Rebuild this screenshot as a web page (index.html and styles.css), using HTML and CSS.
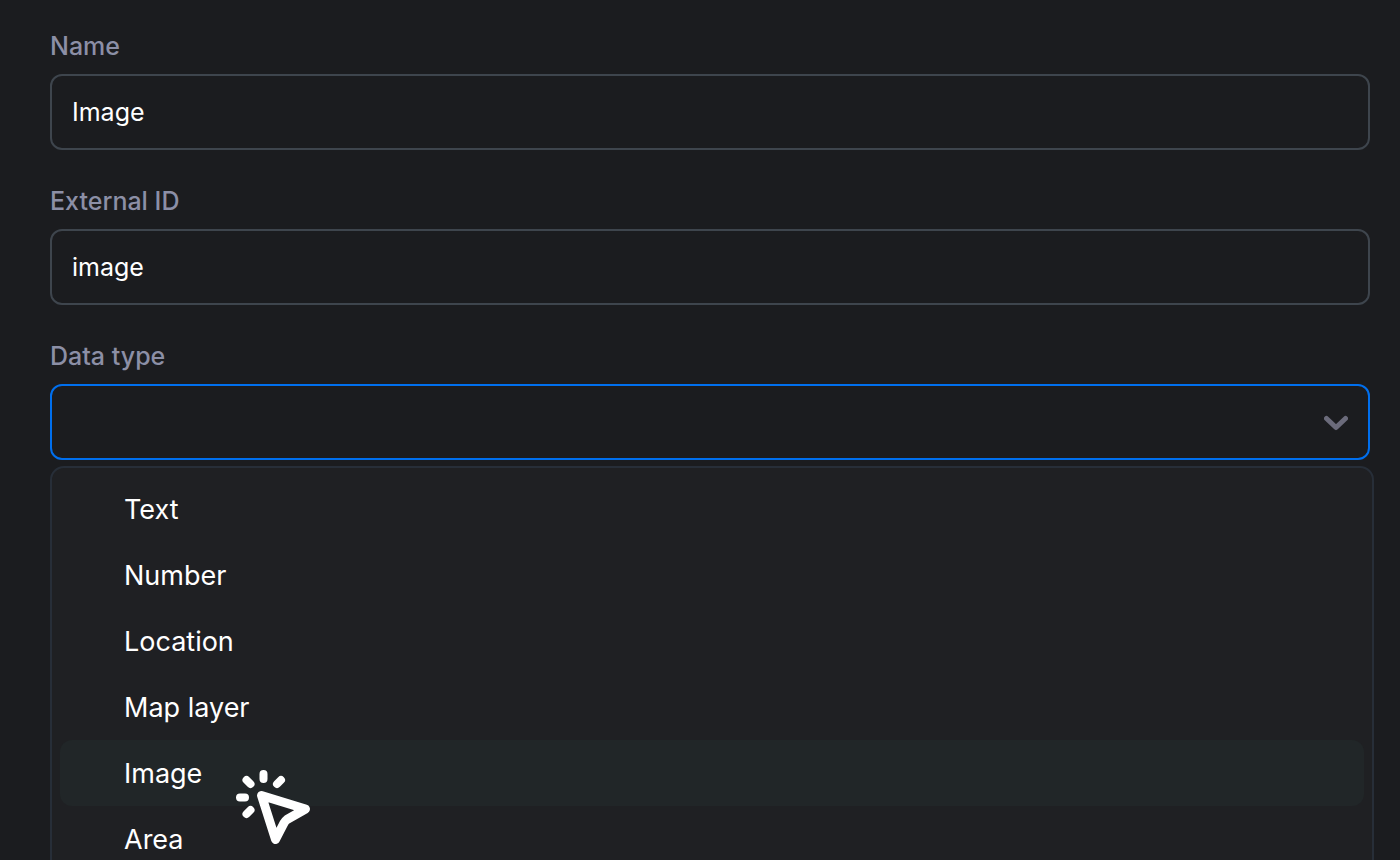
FILE: index.html
```html
<!doctype html>
<html lang="en">
<head>
<meta charset="utf-8">
<meta name="viewport" content="width=device-width, initial-scale=1.0">
<link rel="stylesheet" href="styles.css">
<title>Data type</title>
</head>
<body>
<form class="form">
    <div class="field">
        <label for="name">Name</label>
        <input class="control" type="text" id="name" value="Image">
    </div>
    <div class="field">
        <label for="external-id">External ID</label>
        <input class="control" type="text" id="external-id" value="image">
    </div>
    <div class="field">
        <label for="data-type">Data type</label>
        <div class="select">
            <select class="control active" id="data-type">
                <option value=""></option>
            </select>
            <svg class="chevron" viewBox="0 0 24 24" aria-hidden="true">
                <path d="M2.500 7.500 12 16.500l9.500-9" />
            </svg>
            <ul class="menu" role="listbox" aria-label="Data type">
                <li role="option">Text</li>
                <li role="option">Number</li>
                <li role="option">Location</li>
                <li role="option">Map layer</li>
                <li role="option" class="hover">Image
                    <svg class="pointer" viewBox="0 0 100 100" aria-hidden="true">
                        <path d="M43.500 14v5M20 37.500h5M26.500 20l4 4M61 20l-4 4M26.500 54l4-4" />
                        <path class="arrow" d="M41.500 35.500 85.500 49 67 59.500Q65 61 64 63L55.500 79.500Z" />
                    </svg>
                </li>
                <li role="option">Area</li>
            </ul>
        </div>
    </div>
</form>
</body>
</html>
```

FILE: styles.css
```css
* {
    box-sizing: border-box;
}
body {
    height: 100vh;
    margin: 0;
    overflow: hidden;
    background: #1b1c1f;
    color: #fff;
    font-family: Inter, "Liberation Sans", sans-serif;
    font-size: 25px;
}
.form {
    display: flex;
    flex-direction: column;
    gap: 35px;
    padding: 30px 30px 0 50px;
}
.field {
    display: flex;
    flex-direction: column;
    gap: 12px;
}
label {
    color: #8c8fa6;
    font-weight: 500;
    line-height: 32px;
}
.control {
    display: block;
    width: 100%;
    height: 76px;
    margin: 0;
    padding: 0 20px;
    border: 2px solid #3e454d;
    border-radius: 12px;
    outline: none;
    background: #1b1c1f;
    color: #fff;
    font: inherit;
    appearance: none;
}
.control.active {
    border-color: #006fee;
}
.select {
    position: relative;
}
.chevron {
    position: absolute;
    top: 27px;
    right: 22px;
    width: 24px;
    height: 24px;
    fill: none;
    stroke: #6b6b7b;
    stroke-width: 5;
    stroke-linecap: round;
    stroke-linejoin: round;
    pointer-events: none;
}
/* slightly wider than the select it opens from */
.menu {
    position: absolute;
    top: 82px;
    left: 0;
    right: -4px;
    margin: 0;
    padding: 8px;
    border: 2px solid #272e38;
    border-radius: 14px;
    background: #1f2023;
    list-style: none;
}
.menu li {
    position: relative;
    padding: 2px 64px 0;
    border-radius: 12px;
    font-size: 27px;
    line-height: 64px;
}
.menu .hover {
    background: #212628;
}
.pointer {
    position: absolute;
    z-index: 1;
    top: 20px;
    left: 160px;
    width: 100px;
    height: 100px;
    fill: none;
    stroke: #fff;
    stroke-width: 8;
    stroke-linecap: round;
    stroke-linejoin: round;
}
.pointer .arrow {
    stroke-width: 9;
}
```
